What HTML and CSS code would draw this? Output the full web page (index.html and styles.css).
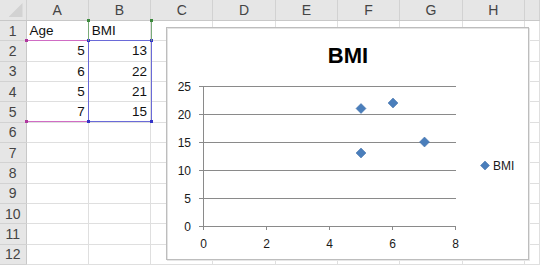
FILE: index.html
```html
<!DOCTYPE html>
<html>
<head>
    <title>BMI sheet</title>
    <link rel="stylesheet" href="styles.css">
</head>
<body>
    <div class="sheet">
        <table class="grid">
            <colgroup>
                <col class="col-rh">
                <col class="col"><col class="col"><col class="col"><col class="col">
                <col class="col"><col class="col"><col class="col"><col class="col">
                <col class="col-tail">
            </colgroup>
            <thead>
                <tr>
                    <th class="corner"></th>
                    <th>A</th><th>B</th><th>C</th><th>D</th>
                    <th>E</th><th>F</th><th>G</th><th>H</th><th></th>
                </tr>
            </thead>
            <tbody>
                <tr><th>1</th><td>Age</td><td>BMI</td><td></td><td></td><td></td><td></td><td></td><td></td><td></td></tr>
                <tr><th>2</th><td class="num">5</td><td class="num">13</td><td></td><td></td><td></td><td></td><td></td><td></td><td></td></tr>
                <tr><th>3</th><td class="num">6</td><td class="num">22</td><td></td><td></td><td></td><td></td><td></td><td></td><td></td></tr>
                <tr><th>4</th><td class="num">5</td><td class="num">21</td><td></td><td></td><td></td><td></td><td></td><td></td><td></td></tr>
                <tr><th>5</th><td class="num">7</td><td class="num">15</td><td></td><td></td><td></td><td></td><td></td><td></td><td></td></tr>
                <tr><th>6</th><td></td><td></td><td></td><td></td><td></td><td></td><td></td><td></td><td></td></tr>
                <tr><th>7</th><td></td><td></td><td></td><td></td><td></td><td></td><td></td><td></td><td></td></tr>
                <tr><th>8</th><td></td><td></td><td></td><td></td><td></td><td></td><td></td><td></td><td></td></tr>
                <tr><th>9</th><td></td><td></td><td></td><td></td><td></td><td></td><td></td><td></td><td></td></tr>
                <tr><th>10</th><td></td><td></td><td></td><td></td><td></td><td></td><td></td><td></td><td></td></tr>
                <tr><th>11</th><td></td><td></td><td></td><td></td><td></td><td></td><td></td><td></td><td></td></tr>
                <tr><th>12</th><td></td><td></td><td></td><td></td><td></td><td></td><td></td><td></td><td></td></tr>
            </tbody>
        </table>

        <!-- chart data range highlights -->
        <div class="range range-cat"><i class="h tl"></i><i class="h tr"></i><i class="h bl"></i><i class="h br"></i></div>
        <div class="range range-val"><i class="h tl"></i><i class="h tr"></i><i class="h bl"></i><i class="h br"></i></div>
        <div class="range range-name"><i class="h tl"></i><i class="h tr"></i></div>

        <div class="chart">
            <svg width="361" height="231" viewBox="0 0 361 231">
                <text class="title" x="181" y="35" text-anchor="middle">BMI</text>

                <g class="gridlines">
                    <line x1="32" y1="58.5" x2="289" y2="58.5"/>
                    <line x1="32" y1="86.5" x2="289" y2="86.5"/>
                    <line x1="32" y1="114.5" x2="289" y2="114.5"/>
                    <line x1="32" y1="142.5" x2="289" y2="142.5"/>
                    <line x1="32" y1="170.5" x2="289" y2="170.5"/>
                    <line x1="32" y1="198.5" x2="289" y2="198.5"/>
                    <line x1="36.5" y1="58" x2="36.5" y2="199"/>
                    <line x1="36.5" y1="198" x2="36.5" y2="202"/>
                    <line x1="99.5" y1="198" x2="99.5" y2="202"/>
                    <line x1="162.5" y1="198" x2="162.5" y2="202"/>
                    <line x1="225.5" y1="198" x2="225.5" y2="202"/>
                    <line x1="288.5" y1="198" x2="288.5" y2="202"/>
                </g>

                <g class="labels">
                    <text x="24" y="63" text-anchor="end">25</text>
                    <text x="24" y="91" text-anchor="end">20</text>
                    <text x="24" y="119" text-anchor="end">15</text>
                    <text x="24" y="147" text-anchor="end">10</text>
                    <text x="24" y="175" text-anchor="end">5</text>
                    <text x="24" y="203" text-anchor="end">0</text>
                    <text x="36.5" y="220" text-anchor="middle">0</text>
                    <text x="99.5" y="220" text-anchor="middle">2</text>
                    <text x="162.5" y="220" text-anchor="middle">4</text>
                    <text x="225.5" y="220" text-anchor="middle">6</text>
                    <text x="288.5" y="220" text-anchor="middle">8</text>
                </g>

                <g class="points">
                    <polygon points="194,120 199,125 194,130 189,125"/>
                    <polygon points="226,70 231,75 226,80 221,75"/>
                    <polygon points="194,75.5 199,80.5 194,85.5 189,80.5"/>
                    <polygon points="257.5,109 262.5,114 257.5,119 252.5,114"/>
                    <polygon points="318,133 322.5,137.5 318,142 313.5,137.5"/>
                </g>
                <text class="legend" x="326" y="142">BMI</text>
            </svg>
        </div>
    </div>
</body>
</html>
```

FILE: styles.css
```css
body {
    margin: 0;
    background-color: #ffffff;
    font-family: "Liberation Sans", Arial, sans-serif;
}
.sheet {
    position: relative;
    width: 540px;
    height: 269px;
    overflow: hidden;
}
.grid {
    border-collapse: collapse;
    table-layout: fixed;
    width: 540px;
    font-size: 13.5px;
    color: #111;
}
.col-rh {
    width: 26px;
}
.col {
    width: 62.3px;
}
.col-tail {
    width: 15.6px;
}
.grid th {
    background-color: #e6e6e6;
    color: #444;
    font-weight: normal;
    font-size: 14px;
    padding: 0;
    border-right: 1px solid #d2d2d2;
    border-bottom: 1px solid #d2d2d2;
}
.grid thead th {
    height: 20px;
    border-bottom: 1px solid #c8c8c8;
}
.grid tbody th {
    border-right: 1px solid #c8c8c8;
    text-align: center;
}
.grid tbody tr {
    height: 20.33px;
}
.grid td {
    padding: 0 3px;
    border-right: 1px solid #dfdfdf;
    border-bottom: 1px solid #dfdfdf;
    white-space: nowrap;
    overflow: hidden;
    vertical-align: middle;
}
.grid td.num {
    text-align: right;
}
.corner {
    position: relative;
}
.corner::after {
    content: "";
    position: absolute;
    right: 3px;
    bottom: 3px;
    width: 14px;
    height: 14px;
    background-color: #d2d2d2;
    clip-path: polygon(100% 0, 100% 100%, 0 100%);
}

/* highlighted chart source ranges */
.range {
    position: absolute;
    box-sizing: border-box;
    border: 1px solid;
    pointer-events: none;
}
.range-cat {
    left: 26px;
    top: 40px;
    width: 63px;
    height: 82px;
    border-color: #d06cc4;
    border-left-color: transparent;
}
.range-val {
    left: 88px;
    top: 40px;
    width: 64px;
    height: 82px;
    border-color: #6a6ad8;
}
.range-name {
    left: 88px;
    top: 20px;
    width: 64px;
    height: 21px;
    border-color: #7aaa7a;
    border-top-color: transparent;
    border-bottom: none;
}
.h {
    position: absolute;
    width: 3px;
    height: 3px;
    background-color: #3535c8;
}
.range-cat .h {
    background-color: #b0389e;
}
.range-name .h {
    background-color: #3d8a3d;
}
.tl { left: -2px; top: -2px; }
.tr { right: -2px; top: -2px; }
.bl { left: -2px; bottom: -2px; }
.br { right: -2px; bottom: -2px; }

/* embedded chart floats over the cells */
.chart {
    position: absolute;
    left: 166px;
    top: 27px;
    width: 361px;
    height: 231px;
    border: 1px solid #bdbdbd;
    background-color: #ffffff;
    box-shadow: inset 1px 1px 0 #e4e4e4, 1px 1px 0 #e6e6e6;
}
.chart svg {
    display: block;
    font-family: "Liberation Sans", Arial, sans-serif;
}
.title {
    font-size: 22px;
    font-weight: bold;
    fill: #000;
}
.gridlines line {
    stroke: #8a8a8a;
    stroke-width: 1;
}
.labels text {
    font-size: 12px;
    fill: #1a1a1a;
}
.points polygon {
    fill: #4a7ebb;
    stroke: #3d6da6;
    stroke-width: 0.5;
}
.legend {
    font-size: 12px;
    fill: #1a1a1a;
}
```
